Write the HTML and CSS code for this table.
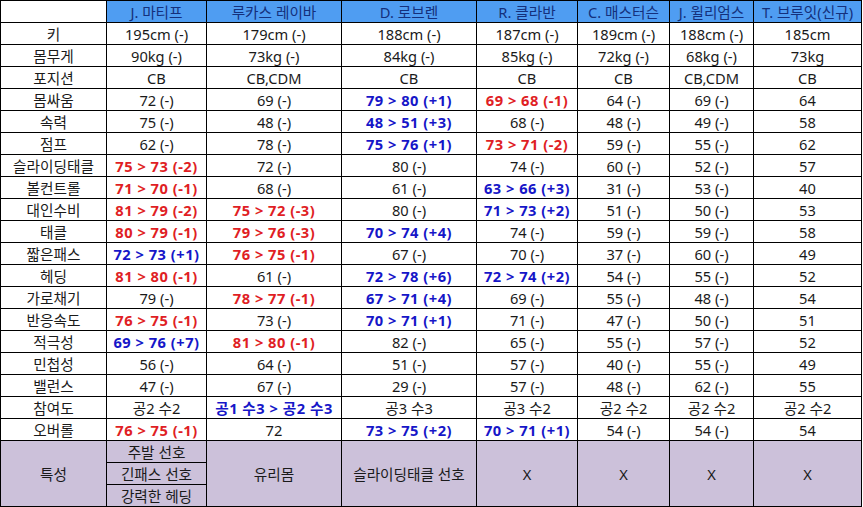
FILE: index.html
```html
<!DOCTYPE html>
<html lang="ko">
<head>
<meta charset="utf-8">
<title>선수 비교</title>
<link rel="stylesheet" href="styles.css">
</head>
<body>
<table class="sheet">
<colgroup>
<col class="c0"><col class="c1"><col class="c2"><col class="c3"><col class="c4"><col class="c5"><col class="c6"><col class="c7">
</colgroup>
<thead>
<tr class="head"><th class="blank"></th><th>J. 마티프</th><th>루카스 레이바</th><th>D. 로브렌</th><th>R. 클라반</th><th>C. 매스터슨</th><th>J. 윌리엄스</th><th>T. 브루잇(신규)</th></tr>
</thead>
<tbody>
<tr><td>키</td><td>195cm (-)</td><td>179cm (-)</td><td>188cm (-)</td><td>187cm (-)</td><td>189cm (-)</td><td>188cm (-)</td><td>185cm</td></tr>
<tr><td>몸무게</td><td>90kg (-)</td><td>73kg (-)</td><td>84kg (-)</td><td>85kg (-)</td><td>72kg (-)</td><td>68kg (-)</td><td>73kg</td></tr>
<tr><td>포지션</td><td>CB</td><td>CB,CDM</td><td>CB</td><td>CB</td><td>CB</td><td>CB,CDM</td><td>CB</td></tr>
<tr><td>몸싸움</td><td>72 (-)</td><td>69 (-)</td><td class="up">79 &gt; 80 (+1)</td><td class="dn">69 &gt; 68 (-1)</td><td>64 (-)</td><td>69 (-)</td><td>64</td></tr>
<tr><td>속력</td><td>75 (-)</td><td>48 (-)</td><td class="up">48 &gt; 51 (+3)</td><td>68 (-)</td><td>48 (-)</td><td>49 (-)</td><td>58</td></tr>
<tr><td>점프</td><td>62 (-)</td><td>78 (-)</td><td class="up">75 &gt; 76 (+1)</td><td class="dn">73 &gt; 71 (-2)</td><td>59 (-)</td><td>55 (-)</td><td>62</td></tr>
<tr><td>슬라이딩태클</td><td class="dn">75 &gt; 73 (-2)</td><td>72 (-)</td><td>80 (-)</td><td>74 (-)</td><td>60 (-)</td><td>52 (-)</td><td>57</td></tr>
<tr><td>볼컨트롤</td><td class="dn">71 &gt; 70 (-1)</td><td>68 (-)</td><td>61 (-)</td><td class="up">63 &gt; 66 (+3)</td><td>31 (-)</td><td>53 (-)</td><td>40</td></tr>
<tr><td>대인수비</td><td class="dn">81 &gt; 79 (-2)</td><td class="dn">75 &gt; 72 (-3)</td><td>80 (-)</td><td class="up">71 &gt; 73 (+2)</td><td>51 (-)</td><td>50 (-)</td><td>53</td></tr>
<tr><td>태클</td><td class="dn">80 &gt; 79 (-1)</td><td class="dn">79 &gt; 76 (-3)</td><td class="up">70 &gt; 74 (+4)</td><td>74 (-)</td><td>59 (-)</td><td>59 (-)</td><td>58</td></tr>
<tr><td>짧은패스</td><td class="up">72 &gt; 73 (+1)</td><td class="dn">76 &gt; 75 (-1)</td><td>67 (-)</td><td>70 (-)</td><td>37 (-)</td><td>60 (-)</td><td>49</td></tr>
<tr><td>헤딩</td><td class="dn">81 &gt; 80 (-1)</td><td>61 (-)</td><td class="up">72 &gt; 78 (+6)</td><td class="up">72 &gt; 74 (+2)</td><td>54 (-)</td><td>55 (-)</td><td>52</td></tr>
<tr><td>가로채기</td><td>79 (-)</td><td class="dn">78 &gt; 77 (-1)</td><td class="up">67 &gt; 71 (+4)</td><td>69 (-)</td><td>55 (-)</td><td>48 (-)</td><td>54</td></tr>
<tr><td>반응속도</td><td class="dn">76 &gt; 75 (-1)</td><td>73 (-)</td><td class="up">70 &gt; 71 (+1)</td><td>71 (-)</td><td>47 (-)</td><td>50 (-)</td><td>51</td></tr>
<tr><td>적극성</td><td class="up">69 &gt; 76 (+7)</td><td class="dn">81 &gt; 80 (-1)</td><td>82 (-)</td><td>65 (-)</td><td>55 (-)</td><td>57 (-)</td><td>52</td></tr>
<tr><td>민첩성</td><td>56 (-)</td><td>64 (-)</td><td>51 (-)</td><td>57 (-)</td><td>40 (-)</td><td>55 (-)</td><td>49</td></tr>
<tr><td>밸런스</td><td>47 (-)</td><td>67 (-)</td><td>29 (-)</td><td>57 (-)</td><td>48 (-)</td><td>62 (-)</td><td>55</td></tr>
<tr><td>참여도</td><td>공2 수2</td><td class="up">공1 수3 &gt; 공2 수3</td><td>공3 수3</td><td>공3 수2</td><td>공2 수2</td><td>공2 수2</td><td>공2 수2</td></tr>
<tr><td>오버롤</td><td class="dn">76 &gt; 75 (-1)</td><td>72</td><td class="up">73 &gt; 75 (+2)</td><td class="up">70 &gt; 71 (+1)</td><td>54 (-)</td><td>54 (-)</td><td>54</td></tr>
<tr class="trait"><td rowspan="3">특성</td><td>주발 선호</td><td rowspan="3">유리몸</td><td rowspan="3">슬라이딩태클 선호</td><td rowspan="3">X</td><td rowspan="3">X</td><td rowspan="3">X</td><td rowspan="3">X</td></tr>
<tr class="trait"><td>긴패스 선호</td></tr>
<tr class="trait"><td>강력한 헤딩</td></tr>
</tbody>
</table>
</body>
</html>
```

FILE: styles.css
```css
html, body {
  margin: 0;
  padding: 0;
  background: #ffffff;
}

.sheet {
  border-collapse: collapse;
  table-layout: fixed;
  width: 862px;
  font-family: "Noto Sans", "Noto Sans CJK KR", sans-serif;
  font-size: 14.67px;
  color: #1a1a1a;
}

.c0 { width: 106px; }
.c1 { width: 100px; }
.c2 { width: 135px; }
.c3 { width: 135px; }
.c4 { width: 101px; }
.c5 { width: 92px; }
.c6 { width: 84px; }
.c7 { width: 108px; }

.sheet tr {
  height: 22px;
}

.sheet th,
.sheet td {
  border: 1px solid #000000;
  padding: 0;
  height: 21px;
  line-height: 20px;
  text-align: center;
  white-space: nowrap;
  overflow: hidden;
}

.head th {
  background: #4f9df2;
  color: #14307c;
  font-weight: normal;
}

.head th.blank {
  background: #ffffff;
}

.up {
  color: #1616c8;
  font-weight: bold;
  letter-spacing: 0.5px;
}

.dn {
  color: #e01e24;
  font-weight: bold;
  letter-spacing: 0.5px;
}

.trait td {
  background: #ccc1da;
}
```
